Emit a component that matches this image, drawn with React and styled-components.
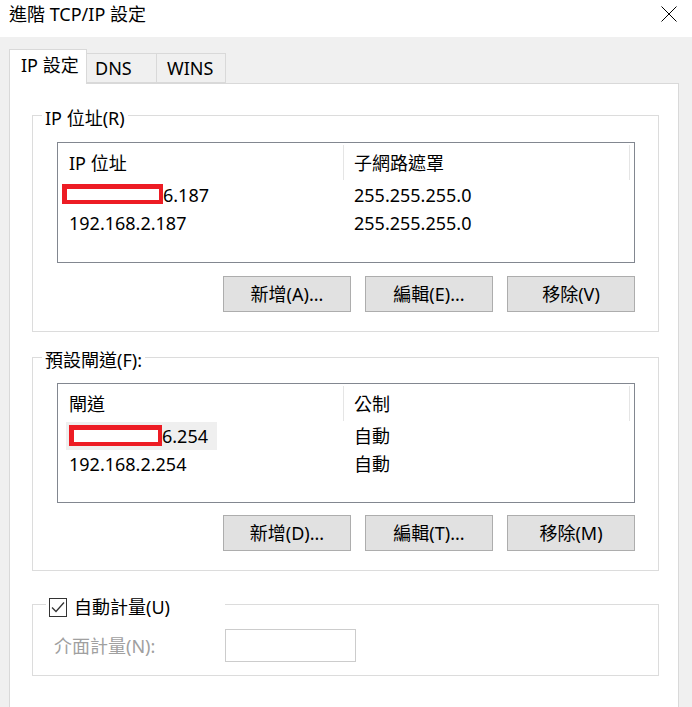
import React from 'react';
import styled, { createGlobalStyle } from 'styled-components';

const Global = createGlobalStyle`
  html, body { margin: 0; padding: 0; background: #f0f0f0; }
  body {
    font-family: "Noto Sans", "Noto Sans CJK TC", sans-serif;
    font-size: 18px;
    color: #000;
  }
  * { box-sizing: border-box; }
`;

const Window = styled.div`
  width: 692px;
  height: 707px;
  overflow: hidden;
  display: flex;
  flex-direction: column;
  background: #f0f0f0;
`;

const TitleBar = styled.div`
  flex: none;
  height: 37px;
  background: #fff;
  display: flex;
  align-items: flex-start;
  justify-content: space-between;
  padding: 3px 15px 0 9px;
`;

const Title = styled.div`
  line-height: 22px;
`;

const CloseIcon = styled.svg`
  margin-top: 3px;
  width: 16px;
  height: 16px;
`;

const Body = styled.div`
  flex: 1;
  display: flex;
  flex-direction: column;
  padding: 12px 13px 0 9px;
  min-height: 0;
`;

const TabStrip = styled.div`
  flex: none;
  display: flex;
  align-items: flex-end;
  height: 34px;
`;

const Tab = styled.div`
  position: relative;
  z-index: 1;
  width: ${p => p.$w}px;
  height: ${p => (p.$active ? 35 : 30)}px;
  margin-bottom: ${p => (p.$active ? -1 : 0)}px;
  padding: ${p => (p.$active ? 4 : 3)}px 0 0 ${p => p.$pl}px;
  line-height: 22px;
  background: ${p => (p.$active ? '#fff' : '#f0f0f0')};
  border: 1px solid #d9d9d9;
  border-left-width: ${p => (p.$first ? 1 : 0)}px;
  border-bottom-width: ${p => (p.$active ? 0 : 1)}px;
  white-space: nowrap;
`;

const Panel = styled.div`
  flex: 1;
  background: #fff;
  border: 1px solid #d9d9d9;
  border-bottom: none;
  padding: 17px 19px 0 22px;
  display: flex;
  flex-direction: column;
`;

const Group = styled.fieldset`
  margin: ${p => p.$mt}px 0 0;
  padding: 0;
  min-width: 0;
  border: 1px solid #dcdcdc;
`;

const Legend = styled.legend`
  margin-left: ${p => p.$ml}px;
  padding: 6px ${p => p.$pr}px 0 3px;
  line-height: 22px;
  white-space: nowrap;
`;

const LegendInner = styled.div`
  display: flex;
  align-items: center;
  height: 22px;
  gap: 7px;
`;

const GroupBody = styled.div`
  padding: ${p => p.$pad};
  display: flex;
  flex-direction: column;
`;

const ListBox = styled.div`
  height: ${p => p.$h}px;
  margin-top: ${p => p.$mt}px;
  border: 1px solid #828790;
  background: #fff;
`;

const HeaderRow = styled.div`
  display: grid;
  grid-template-columns: 285px 287px 1fr;
  height: 38px;
  padding: 2px 0 1px;
`;

const HeaderCell = styled.div`
  display: flex;
  align-items: center;
  padding-left: ${p => (p.$divided ? 10 : 11)}px;
  border-left: ${p => (p.$divided ? '1px solid #e5e5e5' : 'none')};
  border-right: ${p => (p.$divided ? '1px solid #e5e5e5' : 'none')};
  line-height: 22px;
`;

const Row = styled.div`
  display: grid;
  grid-template-columns: 285px 287px 1fr;
  height: 28px;
`;

const Cell = styled.div`
  display: flex;
  align-items: center;
  padding-left: 11px;
  white-space: nowrap;
  line-height: 22px;
`;

const Selected = styled.span`
  display: inline-flex;
  align-items: center;
  height: 28px;
  margin-left: -3px;
  padding: 0 9px 0 3px;
  background: #efefef;
`;

const Redaction = styled.span`
  display: inline-block;
  flex: none;
  width: ${p => p.$w}px;
  height: ${p => p.$h}px;
  margin-left: ${p => p.$ml}px;
  margin-top: -2px;
  background: #fff;
  border-style: solid;
  border-color: #ed1c24;
  border-width: 5px 4px 4px 5px;
`;

const ButtonRow = styled.div`
  display: flex;
  justify-content: flex-end;
  gap: 14px;
  margin-top: ${p => p.$mt}px;
`;

const Button = styled.button`
  width: 128px;
  height: 36px;
  padding: 0;
  border: 1px solid #adadad;
  background: #e1e1e1;
  font: inherit;
  font-size: 18px;
  line-height: 22px;
  color: #000;
`;

const MetricRow = styled.div`
  display: flex;
  align-items: center;
`;

const DisabledLabel = styled.span`
  width: 171px;
  color: #a0a0a0;
  line-height: 22px;
`;

const MetricInput = styled.div`
  width: 131px;
  height: 33px;
  border: 1px solid #cccccc;
  background: #fff;
`;

const CheckIcon = styled.svg`
  width: 18px;
  height: 19px;
  flex: none;
`;

const ipRows = [
  { addr: '6.187', mask: '255.255.255.0', redact: { w: 101, h: 20, ml: -7 } },
  { addr: '192.168.2.187', mask: '255.255.255.0' },
];

const gwRows = [
  { addr: '6.254', metric: '自動', redact: { w: 93, h: 21, ml: 0 }, selected: true },
  { addr: '192.168.2.254', metric: '自動' },
];

function AddrContent({ row }) {
  const inner = (
    <>
      {row.redact && <Redaction $w={row.redact.w} $h={row.redact.h} $ml={row.redact.ml} />}
      {row.addr}
    </>
  );
  return row.selected ? <Selected>{inner}</Selected> : inner;
}

function List({ h, mt, cols, rows, second }) {
  return (
    <ListBox $h={h} $mt={mt}>
      <HeaderRow>
        <HeaderCell>{cols[0]}</HeaderCell>
        <HeaderCell $divided>{cols[1]}</HeaderCell>
      </HeaderRow>
      {rows.map((r, i) => (
        <Row key={i}>
          <Cell><AddrContent row={r} /></Cell>
          <Cell>{r[second]}</Cell>
        </Row>
      ))}
    </ListBox>
  );
}

export default function App() {
  return (
    <>
      <Global />
      <Window>
        <TitleBar>
          <Title>進階 TCP/IP 設定</Title>
          <CloseIcon viewBox="0 0 16 16">
            <path d="M0.5 0.5 L15.5 15.5 M15.5 0.5 L0.5 15.5" stroke="#000" strokeWidth="1" fill="none" />
          </CloseIcon>
        </TitleBar>
        <Body>
          <TabStrip>
            <Tab $active $first $w={78} $pl={11}>IP 設定</Tab>
            <Tab $w={70} $pl={8}>DNS</Tab>
            <Tab $w={69} $pl={10}>WINS</Tab>
          </TabStrip>
          <Panel>
            <Group $mt={0}>
              <Legend $ml={9} $pr={3}>IP 位址(R)</Legend>
              <GroupBody $pad="0 23px 19px 24px">
                <List h={121} mt={13} cols={['IP 位址', '子網路遮罩']} rows={ipRows} second="mask" />
                <ButtonRow $mt={13}>
                  <Button>新增(A)...</Button>
                  <Button>編輯(E)...</Button>
                  <Button>移除(V)</Button>
                </ButtonRow>
              </GroupBody>
            </Group>
            <Group $mt={11}>
              <Legend $ml={9} $pr={3}>預設閘道(F):</Legend>
              <GroupBody $pad="0 23px 19px 24px">
                <List h={120} mt={12} cols={['閘道', '公制']} rows={gwRows} second="metric" />
                <ButtonRow $mt={12}>
                  <Button>新增(D)...</Button>
                  <Button>編輯(T)...</Button>
                  <Button>移除(M)</Button>
                </ButtonRow>
              </GroupBody>
            </Group>
            <Group $mt={19}>
              <Legend $ml={13} $pr={55}>
                <LegendInner>
                  <CheckIcon viewBox="0 0 18 19">
                    <rect x="0.5" y="0.5" width="17" height="18" fill="#fff" stroke="#333" strokeWidth="1" />
                    <path d="M3 9.5 L7 13.5 L15 4.5" stroke="#333" strokeWidth="1.3" fill="none" />
                  </CheckIcon>
                  自動計量(U)
                </LegendInner>
              </Legend>
              <GroupBody $pad="11px 20px 13px 21px">
                <MetricRow>
                  <DisabledLabel>介面計量(N):</DisabledLabel>
                  <MetricInput />
                </MetricRow>
              </GroupBody>
            </Group>
          </Panel>
        </Body>
      </Window>
    </>
  );
}
